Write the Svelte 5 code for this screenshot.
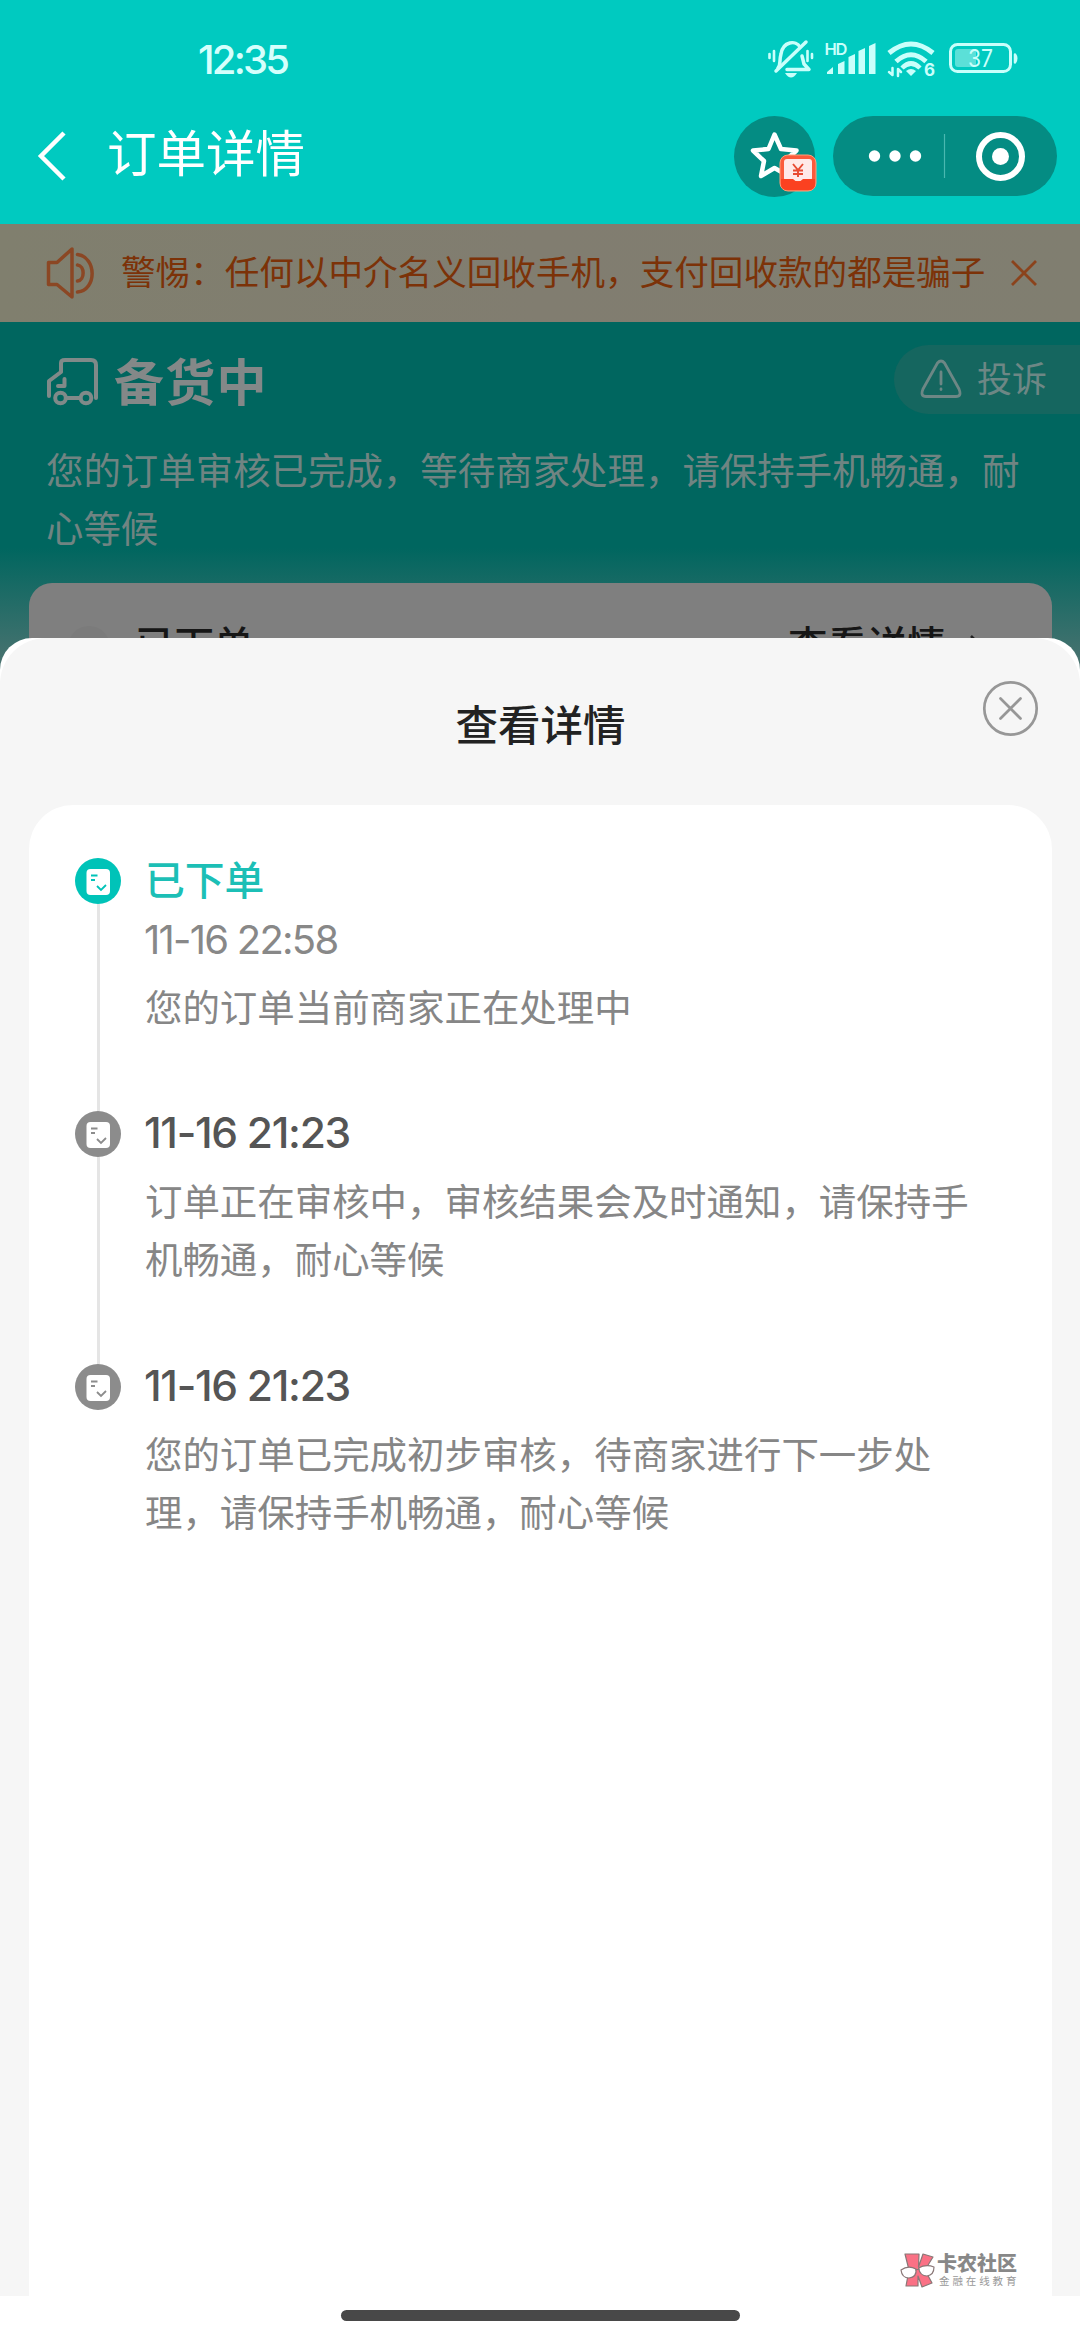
<script>
  const steps = [
    { title: '已下单', time: '11-16 22:58', lines: ['您的订单当前商家正在处理中'], active: true },
    { title: '11-16 21:23', lines: ['订单正在审核中，审核结果会及时通知，请保持手', '机畅通，耐心等候'] },
    { title: '11-16 21:23', lines: ['您的订单已完成初步审核，待商家进行下一步处', '理，请保持手机畅通，耐心等候'] }
  ];
</script>

<div class="screen">
  <header>
    <div class="status-bar">
      <span class="clock">12:35</span>
      <svg class="status-icons" width="254" height="44" viewBox="0 0 254 44" fill="none" stroke="#c9fffb" stroke-linecap="round" stroke-linejoin="round">
        <!-- muted bell -->
        <g stroke-width="3.5">
          <path d="M10 29C13 26 11 22 13 15C15 2 28 1 32 8M34 17L36 25L41 30.500H19" />
          <path d="M8 32L38 3" />
          <path d="M1.500 15V19M6 12V22M39.500 12V22M44 15V19" stroke-width="2.600" />
        </g>
        <path d="M17 34H29Q23 43 17 34Z" fill="#c9fffb" stroke="none" />
        <!-- signal bars -->
        <g fill="#c9fffb" stroke="none">
          <path d="M59 33L65 28V35H59ZM70 25L76.500 22V35H70ZM80.500 18L87 15V35H80.500ZM90.500 12L97 9V35H90.500ZM101 7L107.500 4V35H101Z" />
          <text x="56.500" y="15.500" font-size="16.500" font-weight="600" font-family="Inter, sans-serif" textLength="23">HD</text>
        </g>
        <!-- wifi -->
        <g stroke-width="5" stroke-linecap="butt">
          <path d="M121 14Q143 -4 165 14M128 22.500Q143 9 158 22.500" />
          <path d="M134 29Q143 20 152 29" stroke-width="4.500" />
        </g>
        <path d="M138 32Q143 28 148 32L143 37Z" fill="#c9fffb" stroke="none" />
        <path d="M124.500 29V36L121 33M130 37V30L133 33" stroke-width="2.500" />
        <text x="156" y="37" font-size="17" font-weight="700" font-family="Inter, sans-serif" fill="#c9fffb" stroke="none">6</text>
        <!-- battery -->
        <rect x="182.500" y="5.500" width="60" height="27" rx="7" stroke-width="3" />
        <rect x="187" y="10" width="21" height="18" rx="3" fill="#5be0d8" stroke="none" />
        <path d="M247 15.500Q249.500 19 247 23.500Z" fill="#c9fffb" stroke-width="2.500" />
        <text x="200" y="28" font-size="24" font-family="Inter, sans-serif" fill="#c9fffb" stroke="none" textLength="25" lengthAdjust="spacingAndGlyphs">37</text>
      </svg>
    </div>
    <div class="nav">
      <svg class="back" width="32" height="52" viewBox="0 0 32 52" fill="none" stroke="#fff" stroke-width="4.500"><path d="M29 3L6 26L29 49" /></svg>
      <h1>订单详情</h1>
      <div class="star">
        <svg width="81" height="81" viewBox="0 0 81 81">
          <path d="M40.500 18.500L47 33L62.500 34.500L51 45L54.500 60L40.500 52L27 60L30 45L19 34.500L34.500 33Z" fill="none" stroke="#fff" stroke-width="4.500" stroke-linejoin="round" />
        </svg>
        <svg class="coupon" width="38" height="38" viewBox="0 0 38 38">
          <rect x="1" y="1" width="36" height="36" rx="8" fill="#fb5b3b" stroke="#ff9e78" />
          <rect x="5" y="5" width="28" height="22" rx="3" fill="#ffe9e8" />
          <path d="M2 25H14Q19 30 24 25H36V30Q36 36 29 36H9Q2 36 2 30Z" fill="#fb4120" />
          <path d="M14 10L19 16L24 10M19 16V23M14 16.500H24M14 20H24" fill="none" stroke="#e84a31" stroke-width="1.900" />
        </svg>
      </div>
      <div class="capsule">
        <svg width="224" height="80" viewBox="0 0 224 80">
          <g fill="#fff"><circle cx="41.500" cy="40" r="5.700" /><circle cx="62" cy="40" r="5.700" /><circle cx="82.500" cy="40" r="5.700" /></g>
          <path d="M111.500 18V62" stroke="#4ab8b0" stroke-width="1.200" />
          <circle cx="167.500" cy="40.500" r="21.500" fill="none" stroke="#fff" stroke-width="6" />
          <circle cx="167.500" cy="40.500" r="8.500" fill="#fff" />
        </svg>
      </div>
    </div>
  </header>

  <div class="notice">
    <svg width="50" height="54" viewBox="0 0 50 54" fill="none" stroke="#8b4724" stroke-width="3.500" stroke-linejoin="round" stroke-linecap="round">
      <path d="M3.500 16.500H12L27 3V51L12 38.500H3.500Z" />
      <path d="M32.500 8.500C52 11 52 44 32.500 46M32.500 19C40 20 40 34 32.500 35" />
    </svg>
    <p>警惕：任何以中介名义回收手机，支付回收款的都是骗子</p>
    <svg width="28" height="28" viewBox="0 0 28 28" stroke="#8b431c" stroke-width="2.800"><path d="M2 2L26 26M26 2L2 26" /></svg>
  </div>

  <section class="order">
    <div class="order-head">
      <svg width="54" height="50" viewBox="0 0 54 50" fill="none" stroke="#808a89" stroke-width="4" stroke-linecap="round" stroke-linejoin="round">
        <path d="M4 39V24L16 15V6Q16 3 20 3H46Q51 3 51 8V41" />
        <path d="M19.500 22V29H13" />
        <circle cx="15.500" cy="41" r="5.300" /><circle cx="41" cy="41" r="5.300" />
        <path d="M21 41H35" />
      </svg>
      <h2>备货中</h2>
      <div class="complain">
        <svg width="42" height="40" viewBox="0 0 42 40" fill="none" stroke="#6d8785" stroke-width="2.800" stroke-linejoin="round" stroke-linecap="round">
          <path d="M17.500 4Q21 0 24.500 4L39 30Q42 37.500 36 37.500H6Q0 37.500 3 30Z" />
          <path d="M21 13V25M21 30V30.500" />
        </svg>
        <span>投诉</span>
      </div>
    </div>
    <p class="summary">您的订单审核已完成，等待商家处理，请保持手机畅通，耐<br />心等候</p>
    <div class="order-card">
      <i class="dot"></i>
      <span>已下单</span>
      <span class="more">查看详情</span>
      <svg width="16" height="26" viewBox="0 0 16 26" fill="none" stroke="#222" stroke-width="2.500"><path d="M2 2L13 13L2 24" /></svg>
    </div>
  </section>

  <div class="sheet">
    <div class="sheet-body">
      <div class="sheet-head">
        <h3>查看详情</h3>
        <svg class="close" width="57" height="57" viewBox="0 0 57 57" fill="none" stroke="#979797" stroke-width="2.700" stroke-linecap="round">
          <circle cx="28.500" cy="28.500" r="26.200" /><path d="M18.500 18.500L38.500 38.500M38.500 18.500L18.500 38.500" />
        </svg>
      </div>
      <div class="timeline">
        {#each steps as step, i}
          <div class="step" class:active={step.active}>
            <div class="rail">
              <svg width="46" height="46" viewBox="0 0 46 46" fill="none">
                <circle class="disc" cx="23" cy="23" r="23" />
                <rect x="11.500" y="11" width="23.500" height="26" rx="4" fill="#fff" />
                <path class="mark" d="M16 17.500H22.500M16 22H20M22 28L26 32L31 27" stroke-width="1.800" />
              </svg>
              {#if i < steps.length - 1}<div class="line"></div>{/if}
            </div>
            <div class="info">
              <div class="title" class:date={!step.active}>{step.title}</div>
              {#if step.time}<div class="time">{step.time}</div>{/if}
              <div class="text">{#each step.lines as line}<div>{line}</div>{/each}</div>
            </div>
          </div>
        {/each}
      </div>
    </div>
    <div class="home"><i></i></div>
    <div class="brand">
      <svg width="36" height="38" viewBox="0 0 36 38" stroke="#8a7777" stroke-width="1.200" stroke-linejoin="round">
        <path d="M5 2H19L18.500 15L23 2L33 5L25 18L32 31L22 35L18 24V34H6L9 18Z" fill="#fa7185" />
        <path d="M1 18Q8 13 16 17Q17 25 9 26Q2 26 1 18ZM18.500 16Q26 12 34 15Q34 23 27 24Q20 24 18.500 16ZM15 18L20 17" fill="#fff" />
      </svg>
      <div class="brand-text"><b>卡农社区</b><small>金融在线教育</small></div>
    </div>
  </div>
</div>

<style>
  :global(body) { margin: 0; }
  h1, h2, h3, p { margin: 0; }
  svg { display: block; flex: none; }
  .screen {
    position: relative;
    width: 1080px;
    height: 2340px;
    overflow: hidden;
    background: #7b7b7b;
    font-family: "Noto Sans CJK SC", sans-serif;
    white-space: nowrap;
  }
  header { height: 224px; background: #00cac0; color: #fff; }
  .status-bar { height: 112px; display: flex; align-items: flex-start; justify-content: space-between; padding: 0 58px 0 198px; box-sizing: border-box; }
  .clock { margin-top: 35px; font: 500 40px/50px Inter, sans-serif; letter-spacing: -2.800px; color: #d5fffc; }
  .status-icons { margin-top: 39px; }
  .nav { display: flex; height: 88px; align-items: center; padding-left: 35px; }
  h1 { margin: -10px 0 0 40px; font-size: 49.500px; line-height: 70px; font-weight: 400; width: 200px; }
  .star { position: relative; width: 81px; height: 81px; margin-left: auto; border-radius: 50%; background: #048c83; }
  .coupon { position: absolute; right: -2px; bottom: 5px; }
  .capsule { margin: 0 23px 0 18px; border-radius: 40px; background: #048c83; }

  .notice { height: 98px; display: flex; align-items: center; padding: 0 42px 0 45px; box-sizing: border-box; background: linear-gradient(90deg, #807f6e, #817d70 50%, #807e70); }
  .notice p { flex: 1; margin-left: 26px; margin-top: -7px; font-size: 34.600px; line-height: 50px; color: #7c3208; }

  .order { height: 400px; background: linear-gradient(#00665f 226px, #7b7b7b 420px); }
  .order-head { display: flex; height: 120px; padding-left: 45px; align-items: center; box-sizing: border-box; }
  h2 { margin: -6px 0 0 15px; font-size: 50px; line-height: 70px; letter-spacing: 1.300px; font-weight: 700; color: #848888; }
  .complain { display: flex; align-items: center; margin: -6px 0 0 auto; width: 186px; height: 69px; padding-left: 26px; box-sizing: border-box; border-radius: 35px 0 0 35px; background: #15665f; color: #6d8785; font-size: 35px; }
  .complain span { margin: -4px 0 0 15px; line-height: 50px; }
  .summary { margin: -2px 0 0 46px; font-size: 37.450px; line-height: 58px; color: #708482; }
  .order-card { display: flex; align-items: flex-start; margin: 27px 28px 0 29px; height: 139px; padding: 34px 67px 0 39px; box-sizing: border-box; border-radius: 23px; background: #7f7f7f; font-size: 39.500px; line-height: 52px; font-weight: 500; color: #161616; }
  .dot { width: 42px; height: 42px; margin: 9px 25px 0 0; border-radius: 50%; background: #7b7b7b; }
  .more { margin-left: auto; }
  .order-card svg { margin: 17px 0 0 23px; }

  .sheet { position: absolute; left: 0; top: 638px; width: 1080px; height: 1702px; border-radius: 32px 32px 0 0; background: #fff; overflow: hidden; }
  .sheet-body { height: 1658px; padding: 0 28px 0 29px; box-sizing: border-box; border-radius: 46px 46px 0 0; background: #f6f6f6; display: flex; flex-direction: column; }
  .sheet-head { position: relative; height: 167px; flex: none; display: flex; justify-content: center; align-items: center; }
  h3 { margin-top: 3px; font-size: 42.500px; line-height: 60px; font-weight: 500; color: #222; }
  .close { position: absolute; right: 13px; top: 42px; }
  .timeline { flex: 1; padding: 53px 46px 0; border-radius: 44px 44px 0 0; background: #fff; }
  .step { display: flex; height: 253px; --tone: #8c8c8c; }
  .step.active { --tone: #00c3b8; }
  .rail { width: 46px; margin-right: 24px; display: flex; flex-direction: column; align-items: center; }
  .disc { fill: var(--tone); }
  .mark { stroke: var(--tone); }
  .line { width: 3px; flex: 1; background: #e5e5e5; }
  .title { height: 46px; font-size: 39.800px; line-height: 39px; font-weight: 500; color: #1cbfb6; }
  .title.date { font: 500 42.500px/44px Inter, sans-serif; color: #555; letter-spacing: -1.300px; margin-left: -1px; }
  .time { margin: 11px 0 0 -1px; height: 54px; font: 400 40px/50px Inter, sans-serif; color: #888; letter-spacing: -1.750px; }
  .text { margin-top: 14px; font-size: 37.450px; line-height: 58.300px; color: #868686; }
  .time + .text { margin-top: 8px; }
  .home { height: 44px; display: flex; justify-content: center; align-items: flex-start; }
  .home i { width: 399px; height: 11px; margin-top: 14px; border-radius: 6px; background: #484848; }
  .brand { position: absolute; left: 900px; top: 1614px; display: flex; color: #888; }
  .brand-text { display: flex; flex-direction: column; margin-left: 1px; }
  b { font-size: 20px; line-height: 22px; font-weight: 900; }
  small { margin-left: 2px; font-size: 10.500px; line-height: 14px; letter-spacing: 2.900px; color: #999; }
</style>
